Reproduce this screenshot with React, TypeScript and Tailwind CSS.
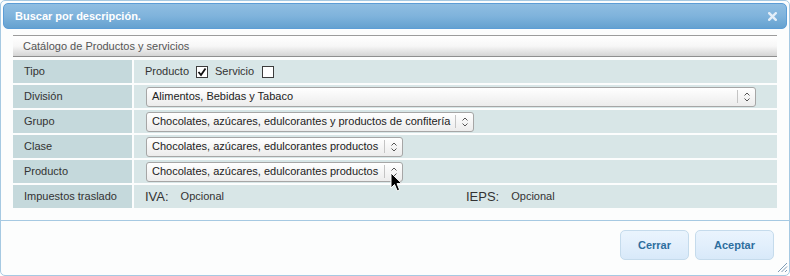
import React from "react";

const font = "font-['Liberation_Sans',Arial,Helvetica,sans-serif]";

function Arrows() {
  return (
    <svg width="8" height="10" viewBox="0 0 8 10" className="block">
      <path d="M1.5 3.5 L4 1 L6.5 3.5" fill="none" stroke="#555" strokeWidth="1" />
      <path d="M1.5 6.5 L4 9 L6.5 6.5" fill="none" stroke="#555" strokeWidth="1" />
    </svg>
  );
}

function FakeSelect({ text, w }: { text: string; w: string }) {
  return (
    <div
      className={`${w} h-[20px] flex items-center rounded-[3px] border border-[#a6a6a6] bg-gradient-to-b from-white to-[#ececec] text-[11px] text-[#222]`}
    >
      <span className="flex-1 pl-[5px] whitespace-nowrap overflow-hidden">{text}</span>
      <span className="w-px h-[13px] bg-[#c4c4c4]" />
      <span className="w-[17px] flex justify-center">
        <Arrows />
      </span>
    </div>
  );
}

function Checkbox({ checked }: { checked?: boolean }) {
  return (
    <span className="inline-flex w-[12px] h-[12px] border border-[#3c3c3c] bg-white items-center justify-center">
      {checked && (
        <svg width="10" height="10" viewBox="0 0 10 10">
          <path d="M1.5 5 L4 8 L8.5 1.5" fill="none" stroke="#111" strokeWidth="1.8" />
        </svg>
      )}
    </span>
  );
}

function Row({ label, children, selectCell }: { label: string; children: React.ReactNode; selectCell?: boolean }) {
  return (
    <div className="flex h-[23px] gap-[2px]">
      <div className="w-[119px] bg-[#c5d9dc] flex items-center pl-[11px] text-[11px] text-[#333]">{label}</div>
      <div className={`flex-1 bg-[#d8e6e7] flex items-center ${selectCell ? "pl-[12px]" : "pl-[11px]"} text-[11px] text-[#333]`}>
        {children}
      </div>
    </div>
  );
}

export default function App() {
  return (
    <div className={`${font} w-[790px] h-[276px] relative`}>
      <div className="w-[790px] h-[276px] border border-[#a6c9e2] rounded-[5px] bg-[#fcfdfd] p-[2px] flex flex-col">
        {/* header */}
        <div className="h-[26px] shrink-0 border border-[#5c9dd6] rounded-[5px] bg-gradient-to-b from-[#90bee2] via-[#7fb3dc] to-[#65a1d0] flex items-center justify-between pl-[11px] pr-[9px]">
          <span className="text-white font-bold text-[11px]">Buscar por descripción.</span>
          <svg width="9" height="9" viewBox="0 0 9 9">
            <path d="M1.2 1.2 L7.8 7.8 M7.8 1.2 L1.2 7.8" stroke="#e3eef8" strokeWidth="2.4" strokeLinecap="square" />
          </svg>
        </div>

        {/* content */}
        <div className="mt-[6px] ml-[10px] w-[764px]">
          <div className="h-[22px] border-t border-b border-t-[#9c9c9c] border-b-[#8e8e8e] bg-gradient-to-b from-white via-[#f7f7f7] to-[#d4d4d4] flex items-center pl-[10px] text-[11px] text-[#555]">
            Catálogo de Productos y servicios
          </div>
          <div className="mt-[3px] flex flex-col gap-[2px]">
            <Row label="Tipo">
              <span>Producto</span>
              <span className="mx-[7px] flex">
                <Checkbox checked />
              </span>
              <span>Servicio</span>
              <span className="ml-[8px] flex">
                <Checkbox />
              </span>
            </Row>
            <Row label="División" selectCell>
              <FakeSelect w="w-[610px]" text="Alimentos, Bebidas y Tabaco" />
            </Row>
            <Row label="Grupo" selectCell>
              <FakeSelect w="w-[328px]" text="Chocolates, azúcares, edulcorantes y productos de confitería" />
            </Row>
            <Row label="Clase" selectCell>
              <FakeSelect w="w-[257px]" text="Chocolates, azúcares, edulcorantes productos" />
            </Row>
            <Row label="Producto" selectCell>
              <FakeSelect w="w-[257px]" text="Chocolates, azúcares, edulcorantes productos" />
            </Row>
            <Row label="Impuestos traslado">
              <div className="w-[321px] flex items-center">
                <span className="text-[13px] text-[#333]">IVA:</span>
                <span className="ml-[12px]">Opcional</span>
              </div>
              <div className="flex items-center">
                <span className="text-[13px] text-[#333]">IEPS:</span>
                <span className="ml-[12px]">Opcional</span>
              </div>
            </Row>
          </div>
        </div>

        {/* footer */}
        <div className="mt-[12px] -mx-[2px] border-t border-[#a6c9e2] flex justify-end gap-[6px] pt-[9px] pr-[15px]">
          <button className="h-[30px] px-[17px] rounded-[5px] border border-[#c5dbec] bg-gradient-to-b from-[#eaf4fd] via-[#e2effc] to-[#d8e9f9] text-[11px] font-bold text-[#2e6e9e]">
            Cerrar
          </button>
          <button className="h-[30px] px-[18px] rounded-[5px] border border-[#c5dbec] bg-gradient-to-b from-[#eaf4fd] via-[#e2effc] to-[#d8e9f9] text-[11px] font-bold text-[#2e6e9e]">
            Aceptar
          </button>
        </div>
      </div>

      {/* resize handle */}
      <svg className="absolute left-[776px] top-[261px]" width="12" height="12" viewBox="0 0 12 12">
        <path d="M11 2 L2 11 M11 5.5 L5.5 11 M11 9 L9 11" stroke="#7e9bb5" strokeWidth="1" />
      </svg>

      {/* mouse cursor */}
      <svg className="absolute left-[390px] top-[172px]" width="14" height="21" viewBox="0 0 14 21">
        <path d="M1 1 L1 16 L4.5 12.5 L7.2 18.8 L9.6 17.8 L7 11.6 L11.8 11.6 Z" fill="#000" stroke="#fff" strokeWidth="1" strokeLinejoin="round" />
      </svg>
    </div>
  );
}
